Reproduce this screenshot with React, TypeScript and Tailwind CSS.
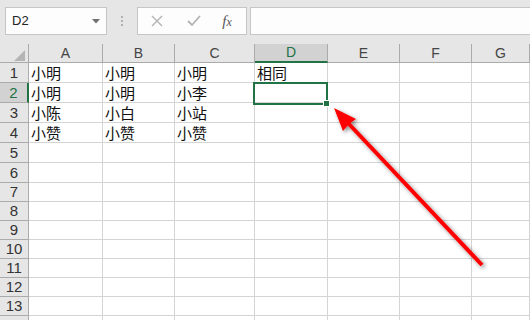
import React from "react";

const cols = ["A", "B", "C", "D", "E", "F", "G"];
const data: string[][] = [
  ["小明", "小明", "小明", "相同"],
  ["小明", "小明", "小李"],
  ["小陈", "小白", "小站"],
  ["小赞", "小赞", "小赞"],
];
const rowHeights = [20, 20, 20, 20, 20, 20, 19, 19, 19, 19, 19, 19, 19, 19];
const rowClass: Record<number, string> = { 20: "h-[20px]", 19: "h-[19px]" };

export default function App() {
  return (
    <div
      className="relative w-[530px] h-[320px] overflow-hidden bg-[#e6e6e6]"
      style={{ fontFamily: '"Liberation Sans", "Noto Sans CJK SC", sans-serif' }}
    >
      {/* formula bar */}
      <div className="h-[44px] flex items-start pt-[7px] pl-[5px]">
        <div className="w-[102px] h-[28px] bg-[#fdfdfd] border border-[#c6c6c6] flex items-center justify-between pl-[6px] pr-[6px]">
          <span className="text-[13px] text-[#222]">D2</span>
          <svg width="8" height="5" viewBox="0 0 8 5">
            <polygon points="0,0 8,0 4,4.5" fill="#707070" />
          </svg>
        </div>
        <div className="w-[30px] h-[28px] flex flex-col items-center justify-center gap-[2px]">
          <div className="w-[2px] h-[2px] bg-[#b0b0b0]" />
          <div className="w-[2px] h-[2px] bg-[#b0b0b0]" />
          <div className="w-[2px] h-[2px] bg-[#b0b0b0]" />
        </div>
        <div className="w-[110px] h-[28px] bg-[#fdfdfd] border border-[#c6c6c6] flex items-center">
          <div className="w-[38px] flex justify-center">
            <svg width="12" height="12" viewBox="0 0 12 12">
              <path d="M1 1 L11 11 M11 1 L1 11" stroke="#b3b3b3" strokeWidth="1.4" />
            </svg>
          </div>
          <div className="w-[36px] flex justify-center">
            <svg width="14" height="12" viewBox="0 0 14 12">
              <path d="M1 6 L5 10 L13 1" stroke="#b3b3b3" strokeWidth="1.8" fill="none" />
            </svg>
          </div>
          <div className="w-[30px] flex justify-center">
            <span
              className="text-[15px] italic text-[#555]"
              style={{ fontFamily: '"Liberation Serif", serif' }}
            >
              f<span className="text-[12px]">x</span>
            </span>
          </div>
        </div>
        <div className="ml-[3px] flex-1 h-[28px] bg-[#fdfdfd] border-y border-l border-[#c6c6c6]" />
      </div>

      {/* grid */}
      <div className="grid grid-cols-[29px_74px_72px_80px_73px_72px_72px_58px]">
        {/* header row */}
        <div className="h-[19px] bg-[#e6e6e6] border-r border-b border-[#ababab] flex items-end justify-end pr-[3px] pb-[1px]">
          <svg width="11" height="11" viewBox="0 0 11 11">
            <polygon points="11,0 11,11 0,11" fill="#b5b5b5" />
          </svg>
        </div>
        {cols.map((c) => (
          <div
            key={c}
            className={
              c === "D"
                ? "h-[19px] bg-[#d2d2d2] border-r border-b-2 border-r-[#ababab] border-b-[#217346] flex items-center justify-center text-[14px] text-[#217346]"
                : "h-[19px] bg-[#e6e6e6] border-r border-b border-[#ababab] flex items-center justify-center text-[14px] text-[#444]"
            }
          >
            {c}
          </div>
        ))}
        {rowHeights.map((h, r) => (
          <React.Fragment key={r}>
            <div
              className={
                r === 1
                  ? `${rowClass[h]} bg-[#d2d2d2] border-r-2 border-b border-r-[#217346] border-b-[#ababab] flex items-end justify-center text-[15px] leading-[18px] text-[#217346]`
                  : `${rowClass[h]} bg-[#e6e6e6] border-r border-b border-[#ababab] flex items-end justify-center text-[15px] leading-[18px] text-[#333]`
              }
            >
              {r < 13 ? r + 1 : ""}
            </div>
            {cols.map((c, ci) => (
              <div
                key={c}
                className={`${rowClass[h]} bg-white border-r border-b border-[#d4d4d4] flex items-end pl-[2px] text-[15px] leading-[18px] text-[#111] whitespace-nowrap`}
                style={{ fontFamily: '"Noto Sans CJK SC", sans-serif' }}
              >
                {data[r]?.[ci] ?? ""}
              </div>
            ))}
          </React.Fragment>
        ))}
      </div>

      {/* selection */}
      <div className="absolute left-[253px] top-[82px] w-[75px] h-[23px] border-2 border-[#217346]" />
      <div className="absolute left-[323px] top-[100px] w-[7px] h-[7px] bg-[#217346] border border-white" />

      {/* arrow */}
      <svg className="absolute left-0 top-0" width="530" height="320" viewBox="0 0 530 320">
        <defs>
          <filter id="sh" x="-20%" y="-20%" width="140%" height="140%">
            <feDropShadow dx="2" dy="2" stdDeviation="2" floodColor="#000" floodOpacity="0.45" />
          </filter>
        </defs>
        <g filter="url(#sh)">
          <line x1="482" y1="265" x2="348" y2="123" stroke="#ff0000" strokeWidth="4" />
          <polygon points="334,108 356,119 349,124 343,131" fill="#ff0000" />
        </g>
      </svg>
    </div>
  );
}
